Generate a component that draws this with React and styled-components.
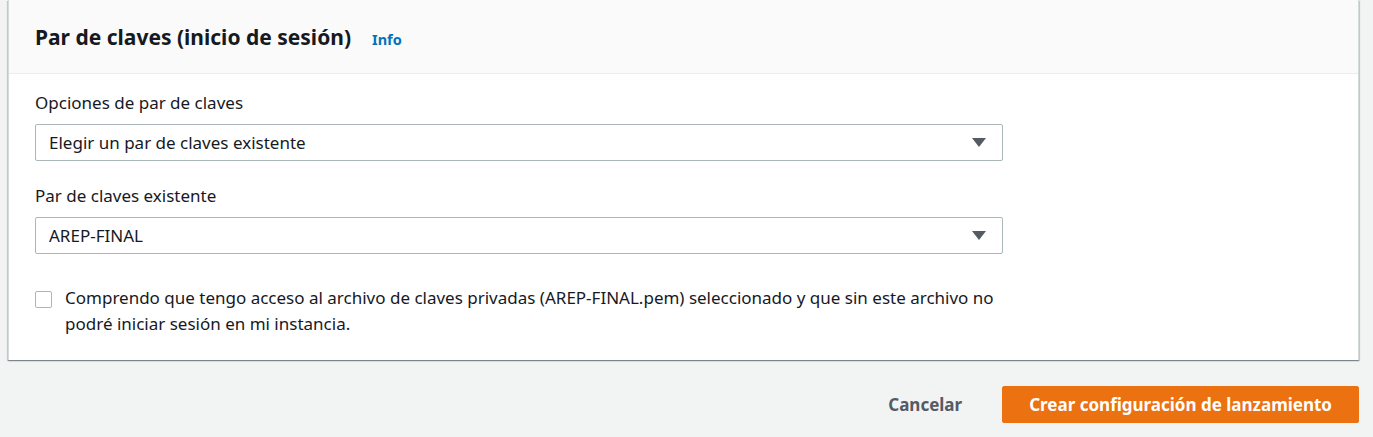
import React from 'react'
import styled, { createGlobalStyle } from 'styled-components'

const Global = createGlobalStyle`
  html, body {
    margin: 0;
    padding: 0;
    background: #f2f3f3;
    font-family: 'Noto Sans', 'Open Sans', Arial, sans-serif;
    color: #16191f;
  }
`

const Page = styled.div`
  padding: 0 14px 0 8px;
`

const Panel = styled.div`
  background: #fff;
  border-left: 1px solid #d5dbdb;
  border-right: 1px solid #d5dbdb;
  box-shadow: 0 1px 1px 0 rgba(0, 28, 36, 0.3), 1px 1px 1px 0 rgba(0, 28, 36, 0.15),
    -1px 1px 1px 0 rgba(0, 28, 36, 0.15);
`

const Header = styled.div`
  background: #fafafa;
  border-bottom: 1px solid #eaeded;
  height: 73px;
  display: flex;
  align-items: center;
  padding: 0 26px;
`

const Title = styled.h2`
  margin: 0;
  font-size: 21px;
  font-weight: 700;
  color: #16191f;
`

const InfoLink = styled.a`
  margin-left: 21px;
  font-size: 14.5px;
  font-weight: 700;
  color: #0073bb;
  text-decoration: none;
  margin-top: 4px;
`

const Body = styled.div`
  padding: 17px 26px 23px;
`

const Field = styled.div`
  margin-bottom: 23px;
`

const Label = styled.div`
  font-size: 17px;
  line-height: 24px;
  margin-bottom: 9px;
`

const Select = styled.div`
  width: 968px;
  height: 37px;
  box-sizing: border-box;
  border: 1px solid #aab7b8;
  border-radius: 2px;
  display: flex;
  align-items: center;
  justify-content: space-between;
  padding: 0 16px 0 13px;
  font-size: 17px;
`

const Caret = styled.span`
  width: 0;
  height: 0;
  border-left: 7px solid transparent;
  border-right: 7px solid transparent;
  border-top: 9px solid #545b64;
`

const CheckRow = styled.label`
  display: flex;
  align-items: flex-start;
  gap: 13px;
  padding-top: 10px;
  width: 968px;
`

const Box = styled.span`
  flex: none;
  width: 17px;
  height: 17px;
  box-sizing: border-box;
  border: 1px solid #aab7b8;
  border-radius: 2px;
  margin-top: 4px;
`

const CheckText = styled.span`
  font-size: 17px;
  line-height: 26px;
  margin-top: -2px;
`

const Actions = styled.div`
  display: flex;
  justify-content: flex-end;
  align-items: center;
  gap: 39px;
  padding: 26px 0 14px;
`

const Button = styled.button`
  font-family: inherit;
  font-size: 17px;
  font-weight: 700;
  border-radius: 2px;
  height: 37px;
  cursor: pointer;
  border: 1px solid ${p => (p.primary ? '#ec7211' : 'transparent')};
  background: ${p => (p.primary ? '#ec7211' : 'transparent')};
  color: ${p => (p.primary ? '#fff' : '#545b64')};
  padding: ${p => (p.primary ? '0 26px' : '0')};
`

export default function App() {
  return (
    <Page>
      <Global />
      <Panel>
        <Header>
          <Title>Par de claves (inicio de sesión)</Title>
          <InfoLink href="#">Info</InfoLink>
        </Header>
        <Body>
          <Field>
            <Label>Opciones de par de claves</Label>
            <Select>
              Elegir un par de claves existente
              <Caret />
            </Select>
          </Field>
          <Field>
            <Label>Par de claves existente</Label>
            <Select>
              AREP-FINAL
              <Caret />
            </Select>
          </Field>
          <CheckRow>
            <Box />
            <CheckText>
              Comprendo que tengo acceso al archivo de claves privadas (AREP-FINAL.pem) seleccionado y
              que sin este archivo no podré iniciar sesión en mi instancia.
            </CheckText>
          </CheckRow>
        </Body>
      </Panel>
      <Actions>
        <Button>Cancelar</Button>
        <Button primary>Crear configuración de lanzamiento</Button>
      </Actions>
    </Page>
  )
}
